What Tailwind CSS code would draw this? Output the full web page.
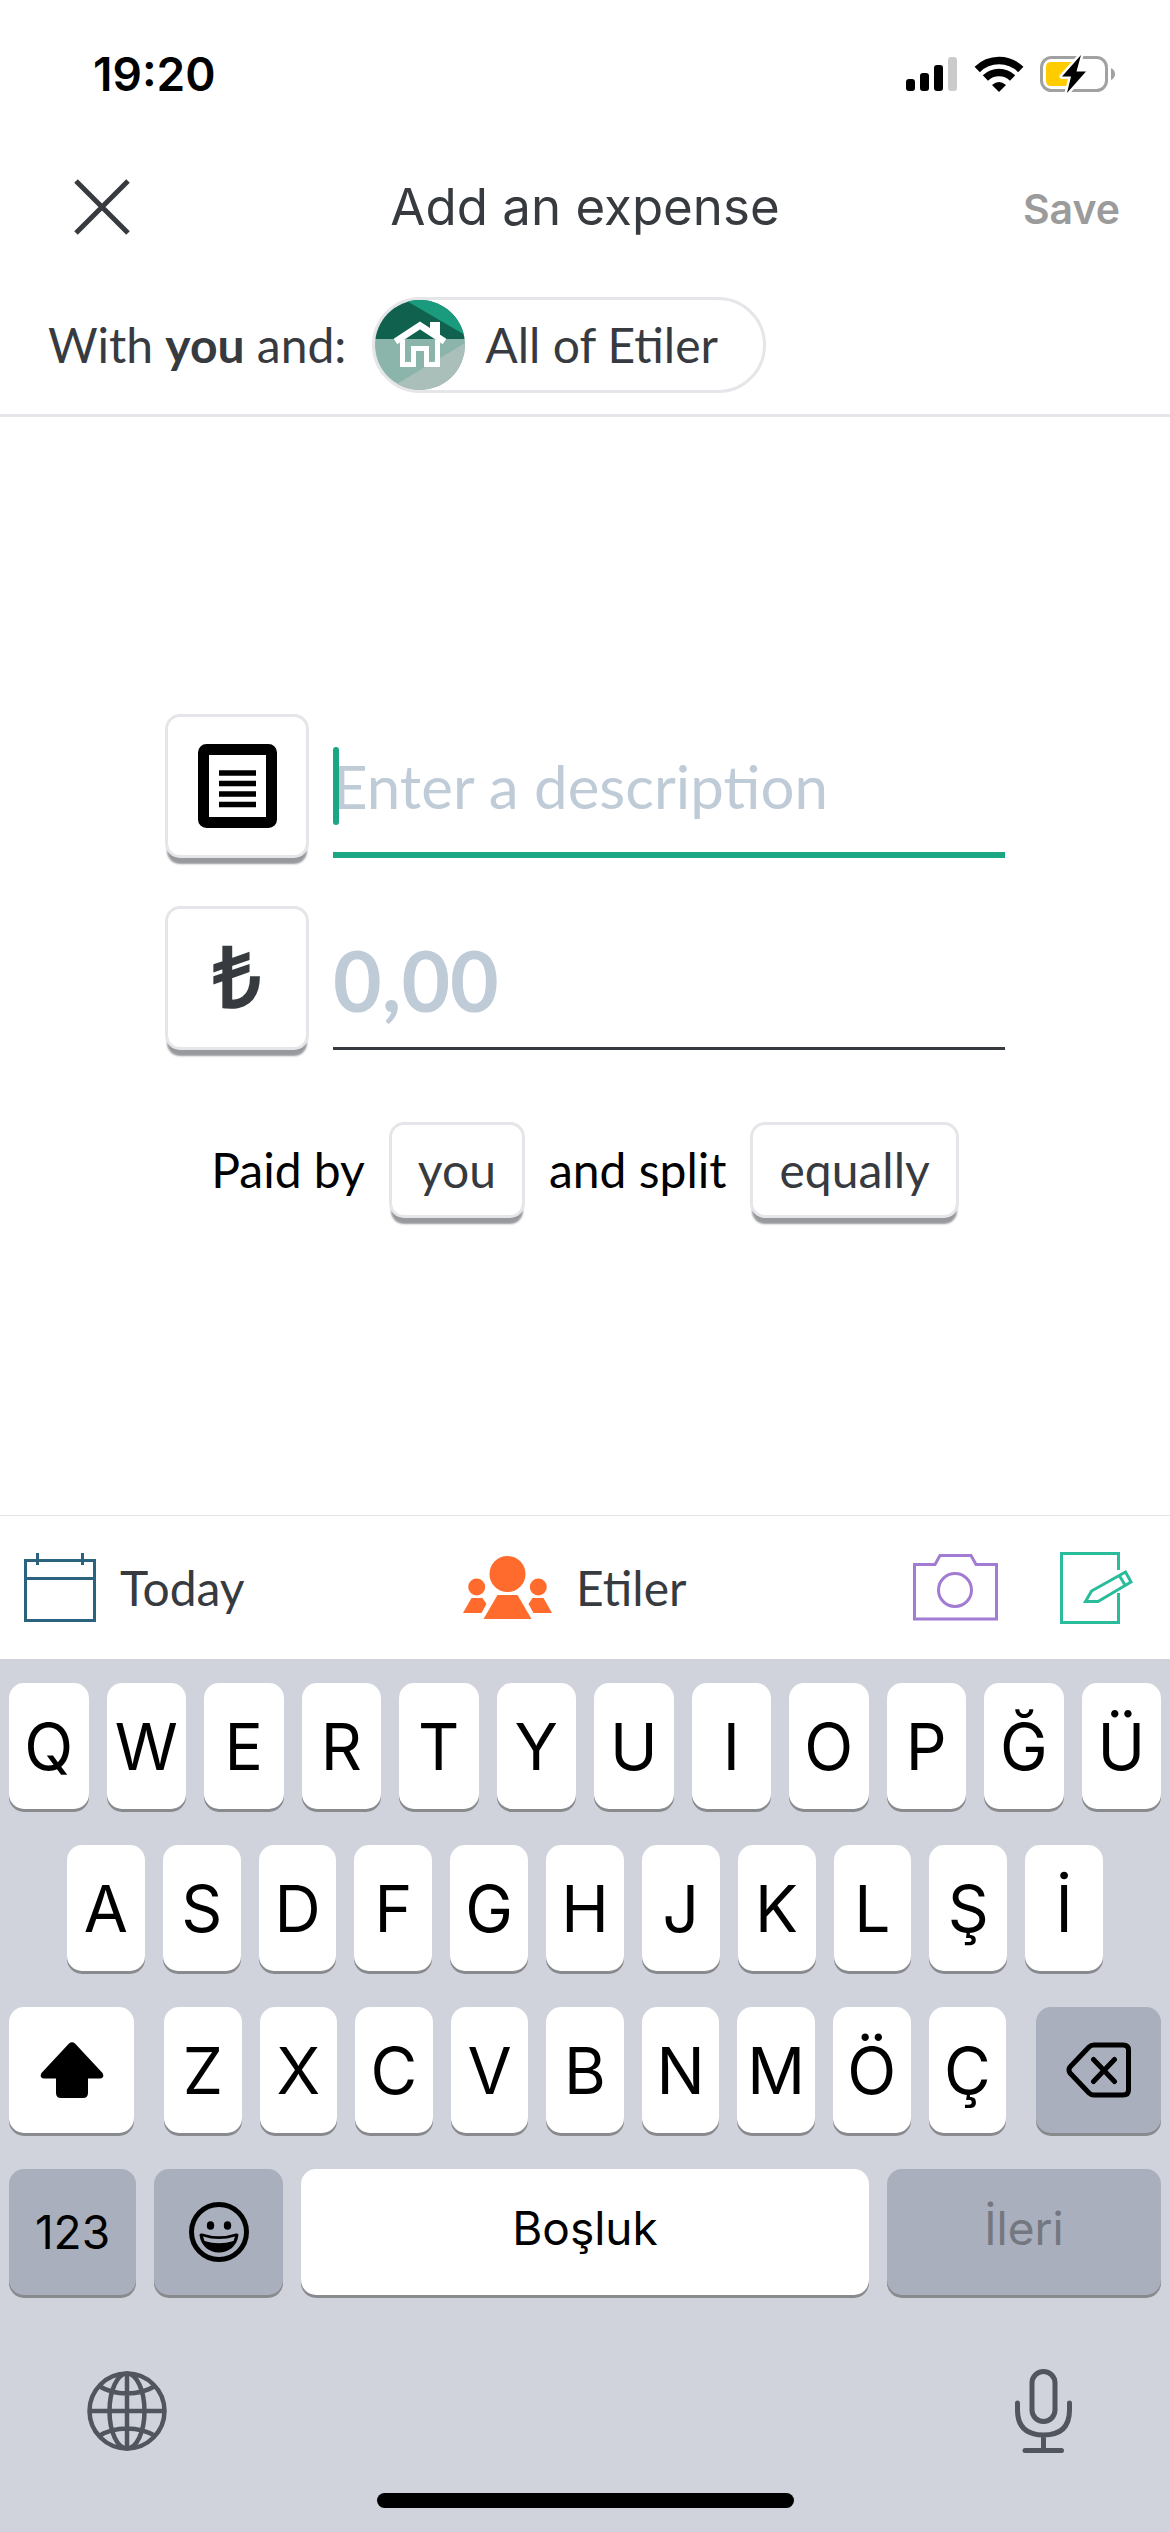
<!DOCTYPE html>
<html lang="en">
<head>
  <meta charset="UTF-8" />
  <meta name="viewport" content="width=device-width, initial-scale=1.0" />
  <title>Add an expense</title>
  <script src="https://cdn.jsdelivr.net/npm/@tailwindcss/browser@4"></script>
</head>
<body class="flex min-h-screen flex-col bg-white font-['Lato',sans-serif] text-[48px] leading-[60px] text-[#373b3f]">

  <!-- Status bar -->
  <div class="flex h-[147px] items-center justify-between pr-[54px] pl-[93px] font-['Inter',sans-serif] text-black">
    <span class="text-[46px] font-semibold">19:20</span>
    <div class="flex items-center gap-4">
      <svg class="h-[36px] w-[52px]" viewBox="0 0 52 36" fill="#000">
        <rect x="0" y="23" width="9" height="12" rx="3" />
        <rect x="14" y="17" width="9" height="18" rx="3" />
        <rect x="28" y="9" width="9" height="26" rx="3" />
        <rect x="42" y="1" width="9" height="34" rx="3" fill="#cbcbcb" />
      </svg>
      <svg class="h-[36px] w-[50px]" viewBox="0 0 50 36" fill="none" stroke="#000" stroke-width="7.5">
        <path d="M3.200 13.500A31 31 0 0 1 46.800 13.500" />
        <path d="M11.400 22A19.500 19.500 0 0 1 38.600 22" />
        <path d="M25 36L18 29Q25 23 32 29Z" fill="#000" stroke="none" />
      </svg>
      <svg class="h-[40px] w-[76px]" viewBox="0 0 76 40">
        <rect x="1.500" y="3.500" width="65" height="33" rx="10" fill="none" stroke="#a1a1a1" stroke-width="3" />
        <path d="M71 14Q75 16 75 20T71 26Z" fill="#a1a1a1" />
        <path d="M11 8H33V32H11Q6 32 6 27V13Q6 8 11 8Z" fill="#ffcc00" />
        <path d="M41 1L22 22.500H31L27 39L46 17.500H36.500Z" fill="#000" stroke="#fff" stroke-width="5" stroke-linejoin="round" paint-order="stroke" />
      </svg>
    </div>
  </div>

  <!-- Title bar -->
  <header class="grid h-[120px] grid-cols-[1fr_auto_1fr] items-center px-[50px] font-['Inter',sans-serif]">
    <button aria-label="Close" class="justify-self-start px-6">
      <svg class="size-[56px]" viewBox="0 0 56 56" stroke="#373b3f" stroke-width="5"><path d="M2 2L54 54M54 2L2 54" /></svg>
    </button>
    <h1 class="text-[51px]">Add an expense</h1>
    <button class="justify-self-end pt-1 text-[41px] font-semibold text-[#9b9b9b]">Save</button>
  </header>

  <section class="flex h-[150px] items-center gap-[26px] border-b-3 border-[#e5e5ea] pt-[30px] pb-[21px] pl-12">
    <p>With <b>you</b> and:</p>
    <button class="flex h-[96px] items-center gap-5 rounded-full border-3 border-[#e5e5ea] pr-[45px]">
      <svg class="size-[90px] rounded-full" viewBox="0 0 90 90">
        <rect width="90" height="39" fill="#10614e" />
        <path d="M30 0H90V35Z" fill="#1a9b7e" />
        <rect y="39" width="90" height="51" fill="#8bb5aa" />
        <path d="M12 90L90 43V90Z" fill="#aabfba" />
        <path d="M27.500 40V64.500H38.500V48.500H51.500V64.500H62.500V40" fill="none" stroke="#fff" stroke-width="5" />
        <path d="M20.500 41.500L45 25.500L69.500 41.500" fill="none" stroke="#fff" stroke-width="6.500" />
        <path d="M55 22H65V38L55 31Z" fill="#fff" />
      </svg>
      <span>All of Etiler</span>
    </button>
  </section>

  <!-- Expense form -->
  <main class="flex flex-1 flex-col items-center justify-center gap-12 px-[165px]">
    <div class="flex w-full items-stretch gap-6">
      <button aria-label="Category" class="flex size-[144px] shrink-0 items-center justify-center rounded-[15px] border-3 border-[#e5e5ea] bg-white shadow-[0_8px_2px_-2px_#98999c]">
        <svg class="h-[84px] w-[79px]" viewBox="0 0 79 84">
          <rect x="5.500" y="5.500" width="68" height="73" rx="3" fill="none" stroke="#000" stroke-width="11" />
          <path d="M21 29H58M21 39.500H58M21 50H58M21 60.500H58" stroke="#000" stroke-width="5.500" />
        </svg>
      </button>
      <div class="relative flex-1">
        <input aria-label="Description" type="text" placeholder="Enter a description" class="h-full w-full border-b-6 border-[#1ba784] pt-[6px] text-[60px] leading-[80px] outline-none placeholder:text-[#bfccd8]" />
        <span class="absolute top-[33px] left-0 h-[78px] w-[6px] rounded-full bg-[#1ba784]"></span>
      </div>
    </div>

    <div class="flex w-full items-stretch gap-6">
      <button aria-label="Currency" class="flex size-[144px] shrink-0 items-center justify-center rounded-[15px] border-3 border-[#e5e5ea] bg-white font-['Liberation_Sans',sans-serif] text-[84px] font-bold shadow-[0_8px_2px_-2px_#98999c]">₺</button>
      <div class="flex-1">
        <input aria-label="Amount" type="text" inputmode="decimal" placeholder="0,00" class="h-full w-full border-b-3 border-[#373b3f] pt-[6px] text-[84px] leading-[110px] font-bold outline-none placeholder:text-[#bfccd8]" />
      </div>
    </div>

    <div class="flex items-center gap-6 pt-6 text-black">
      <span>Paid by</span>
      <button class="h-[96px] rounded-[15px] border-3 border-[#e5e5ea] bg-white px-[26px] text-[#373b3f] shadow-[0_8px_2px_-2px_#98999c]">you</button>
      <span>and split</span>
      <button class="h-[96px] rounded-[15px] border-3 border-[#e5e5ea] bg-white px-[26px] text-[#373b3f] shadow-[0_8px_2px_-2px_#98999c]">equally</button>
    </div>
  </main>

  <!-- Toolbar -->
  <nav class="flex h-[144px] items-center justify-between border-t border-[#e5e5e5] pr-[36px] pl-6">
    <button class="flex items-center gap-6">
      <svg class="h-[70px] w-[72px]" viewBox="0 0 72 70" fill="none" stroke="#2b637f" stroke-width="3"><path d="M1.500 7.500H70.500V67.500H1.500ZM1.500 25.500H70.500M13.500 0V12M58.500 0V12" /></svg>
      <span>Today</span>
    </button>
    <button class="flex items-center gap-6 pr-2">
      <svg class="h-[64px] w-[89px]" viewBox="0 0 89 64" fill="#ff6b2c">
        <circle cx="44.500" cy="18" r="18" />
        <path d="M34.500 39H54.500L68.500 63H20.500Z" />
        <circle cx="13.700" cy="31" r="8.500" />
        <circle cx="75.300" cy="31" r="8.500" />
        <path d="M8.500 42H19.500L23.500 48L18.500 57H0Z" />
        <path d="M80.500 42H69.500L65.500 48L70.500 57H89Z" />
      </svg>
      <span>Etiler</span>
    </button>
    <div class="flex items-center gap-[62px]">
      <button aria-label="Add photo">
        <svg class="h-[67px] w-[85px]" viewBox="0 0 85 67" fill="none" stroke="#a27bd3" stroke-width="3"><path d="M1.500 10.500H22L27 1.500H58L63 10.500H83.500V65H1.500Z" /><circle cx="42" cy="36" r="16.500" /></svg>
      </button>
      <button aria-label="Add note">
        <svg class="h-[72px] w-[74px]" viewBox="0 0 74 72" fill="none" stroke="#29bc9a" stroke-width="3"><path d="M58.500 18V1.500H1.500V70.500H58.500V41" /><path d="M25.500 49.500L31.500 39L65.500 20L71 30L38 49.500ZM59 23L65 33" /></svg>
      </button>
    </div>
  </nav>

  <!-- Keyboard -->
  <div class="flex flex-col gap-9 bg-[#d0d3db] px-[9px] pt-6 font-['Inter',sans-serif] text-black">
    <div class="flex gap-[18px]" data-keys="QWERTYUIOPĞÜ"></div>
    <div class="flex gap-[18px] px-[58px]" data-keys="ASDFGHJKLŞİ"></div>
    <div class="flex gap-[30px]">
      <button aria-label="Shift" class="flex h-[126px] w-[125px] items-center justify-center rounded-[15px] bg-white shadow-[0_3px_0_#888a8e]">
        <svg class="h-[56px] w-[64px]" viewBox="0 0 64 56"><path d="M29 1.500Q32 -1 35 1.500L62.500 31Q65 36 60 36.500H48V51Q48 56 43 56H21Q16 56 16 51V36.500H4Q-1 36 1.500 31Z" /></svg>
      </button>
      <div class="flex flex-1 gap-[18px]" data-keys="ZXCVBNMÖÇ"></div>
      <button aria-label="Delete" class="flex h-[126px] w-[125px] items-center justify-center rounded-[15px] bg-[#a9afbc] shadow-[0_3px_0_#888a8e]">
        <svg class="h-[56px] w-[66px]" viewBox="0 0 66 56" fill="none" stroke="#000" stroke-width="5" stroke-linecap="round" stroke-linejoin="round"><path d="M28 3H57Q62.500 3 62.500 8V48Q62.500 53 57 53H28Q25 53 23 51L4 31Q2 28 4 25L23 5Q25 3 28 3ZM27.500 17.500L48.500 39.500M48.500 17.500L27.500 39.500" /></svg>
      </button>
    </div>
    <div class="flex gap-[18px] text-[46px]">
      <button class="h-[126px] w-[127px] rounded-[15px] bg-[#a9afbc] shadow-[0_3px_0_#888a8e]">123</button>
      <button aria-label="Emoji" class="flex h-[126px] w-[129px] items-center justify-center rounded-[15px] bg-[#a9afbc] shadow-[0_3px_0_#888a8e]">
        <svg class="size-[60px]" viewBox="0 0 60 60">
          <circle cx="30" cy="30" r="27.500" fill="none" stroke="#000" stroke-width="5" />
          <ellipse cx="21.500" cy="23.500" rx="3.700" ry="4.300" />
          <ellipse cx="38.500" cy="23.500" rx="3.700" ry="4.300" />
          <path d="M10.500 33Q10.500 31 13 31.500Q30 37 47 31.500Q49.500 31 49.500 33C48 44 40 50.500 30 50.500S12 44 10.500 33Z" />
          <path d="M14 34.500Q30 39.500 46 34.500L44.500 39Q30 43.500 15.500 39Z" fill="#a9afbc" />
        </svg>
      </button>
      <button class="h-[126px] flex-1 rounded-[15px] bg-white pb-2 shadow-[0_3px_0_#888a8e]">Boşluk</button>
      <button class="h-[126px] w-[274px] rounded-[15px] bg-[#a9afbc] pb-2 text-[#73777f] shadow-[0_3px_0_#888a8e]">İleri</button>
    </div>

    <div class="flex h-[126px] items-center justify-between pt-[34px] pr-[89px] pl-[78px]">
      <button aria-label="Switch keyboard">
        <svg class="size-[80px]" viewBox="0 0 80 80" fill="none" stroke="#51555e" stroke-width="4.500">
          <circle cx="40" cy="40" r="37.500" />
          <ellipse cx="40" cy="40" rx="17.500" ry="37.500" />
          <path d="M40 2V78M2 40H78M12 15Q24 22.500 40 22.500T68 15M12 65Q24 57.500 40 57.500T68 65" />
        </svg>
      </button>
      <button aria-label="Dictate">
        <svg class="h-[85px] w-[57px]" viewBox="0 0 57 85" fill="none" stroke="#51555e" stroke-width="5" stroke-linecap="round">
          <rect x="17" y="2.500" width="23" height="50" rx="11.500" />
          <path d="M2.500 34V41Q2.500 66 28.500 66T54.500 41V34M28.500 66V81.500M10 81.500H46.500" />
        </svg>
      </button>
    </div>
    <div class="mb-6 h-[15px] w-[417px] self-center rounded-full bg-black"></div>
  </div>

  <script>
    document.querySelectorAll('[data-keys]').forEach((row) => {
      for (const letter of row.dataset.keys) {
        const key = document.createElement('button');
        key.className = 'h-[126px] min-w-0 flex-1 rounded-[15px] bg-white pt-[2px] text-[64px] shadow-[0_3px_0_#888a8e]';
        key.textContent = letter;
        row.appendChild(key);
      }
    });
  </script>
</body>
</html>
